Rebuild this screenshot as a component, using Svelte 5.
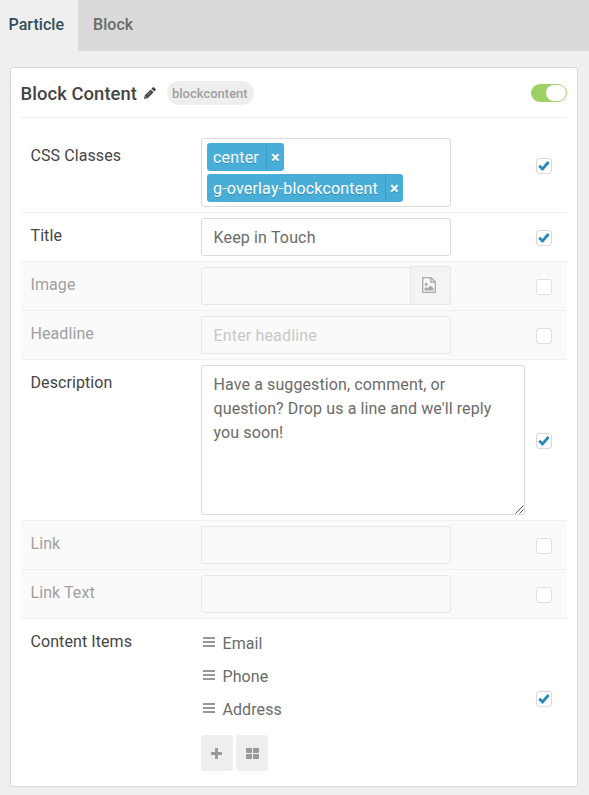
<script>
  const tags = ['center', 'g-overlay-blockcontent'];
  const items = ['Email', 'Phone', 'Address'];
  const rows = [
    { label: 'CSS Classes', kind: 'tags', on: true },
    { label: 'Title', kind: 'text', value: 'Keep in Touch', on: true },
    { label: 'Image', kind: 'image', on: false },
    { label: 'Headline', kind: 'text', placeholder: 'Enter headline', on: false },
    { label: 'Description', kind: 'area', on: true },
    { label: 'Link', kind: 'text', on: false },
    { label: 'Link Text', kind: 'text', on: false },
    { label: 'Content Items', kind: 'items', on: true }
  ];
</script>

<div class="page">
  <nav>
    <span class="tab active">Particle</span>
    <span class="tab">Block</span>
  </nav>
  <section class="card">
    <header>
      <h4>Block Content</h4>
      <svg class="pencil" width="12" height="12" viewBox="0 0 12 12"><path fill="#444" d="M0 12 .8 8.300 6.700 2.400 9.600 5.300 3.700 11.200zM7.400 1.700 8.700.4Q9.400-.2 10.100.4L11.600 1.900Q12.200 2.600 11.600 3.300L10.300 4.600z"/><path d="M3 8.200 6.800 4.400" stroke="#bbb" stroke-width=".6"/><path d="M1.300 9.600 2.400 10.700" stroke="#fff" stroke-width=".8"/></svg>
      <span class="badge">blockcontent</span>
      <span class="toggle"><i></i></span>
    </header>
    {#each rows as row}
      <div class="row {row.kind}" class:off={!row.on}>
        <div class="label">{row.label}</div>
        <div class="field">
          {#if row.kind === 'tags'}
            <div class="selectize">
              {#each tags as tag}
                <div class="tag"><span>{tag}</span><b>×</b></div>
              {/each}
            </div>
          {:else if row.kind === 'text'}
            <div class="input" class:placeholder={!row.value}>{row.value ?? row.placeholder ?? ''}</div>
          {:else if row.kind === 'image'}
            <div class="group">
              <div class="input"></div>
              <div class="pick">
                <svg width="14" height="16" viewBox="0 0 14 16"><path fill="none" stroke="#aaa" stroke-width="1.3" d="M.7.7H9L13.3 5V15.3H.7zM8.8.7V5.2H13.3"/><circle cx="4.2" cy="7.3" r="1.5" fill="#aaa"/><path fill="#aaa" d="M2.5 13.5V11.5L4 10 5.5 11.2 8.5 8.5 11.5 11.3V13.5z"/></svg>
              </div>
            </div>
          {:else if row.kind === 'area'}
            <div class="textarea">
              Have a suggestion, comment, or<br />question? Drop us a line and we'll reply<br />you soon!
              <svg class="grip" width="9" height="9" viewBox="0 0 9 9"><path d="M.5 8.5 8.5.5M4.5 8.5 8.5 4.5" stroke="#555" stroke-width="1"/></svg>
            </div>
          {:else}
            <ul>
              {#each items as item}
                <li>
                  <svg width="12" height="10" viewBox="0 0 12 10"><path fill="#999" d="M0 0h12v2H0zM0 4h12v2H0zM0 8h12v2H0z"/></svg>
                  {item}
                </li>
              {/each}
            </ul>
            <div class="buttons">
              <span class="btn"><svg width="11" height="11" viewBox="0 0 11 11"><path fill="#999" d="M4.7 0h1.6q.7 0 .7.7V4h3.3q.7 0 .7.7v1.6q0 .7-.7.7H7v3.3q0 .7-.7.7H4.7q-.7 0-.7-.7V7H.7Q0 7 0 6.300V4.700Q0 4 .7 4H4V.7Q4 0 4.700 0z"/></svg></span>
              <span class="btn"><svg width="13" height="11" viewBox="0 0 13 11"><g fill="#999"><rect width="6" height="5" rx=".8"/><rect x="7" width="6" height="5" rx=".8"/><rect y="6" width="6" height="5" rx=".8"/><rect x="7" y="6" width="6" height="5" rx=".8"/></g></svg></span>
            </div>
          {/if}
        </div>
        <span class="check">
          {#if row.on}
            <svg width="12" height="10" viewBox="0 0 12 10"><path fill="none" stroke="#2388bd" stroke-width="2.700" d="M1.200 4.700 4.500 8 10.600 1"/></svg>
          {/if}
        </span>
      </div>
    {/each}
  </section>
</div>

<style>
  :global(body) { background: #efefef; }
  .page, .page * { box-sizing: border-box; }
  .page {
    height: 795px;
    overflow: hidden;
    background: #efefef;
    color: #444;
    font: 16px/24px Roboto, "Liberation Sans", sans-serif;
    letter-spacing: 0.08px;
  }
  nav { display: flex; height: 51px; background: #dadada; letter-spacing: 0.04px; }
  .tab { padding: 13px 15px 0; font-weight: 500; color: #6b6b6b; }
  .active { width: 78px; padding: 13px 0 0 8.5px; background: #efefef; color: #314d59; }
  .card {
    width: 568px;
    height: 720px;
    margin: 16px 0 0 10px;
    padding: 0 10px;
    border: 1px solid #d9d9d9;
    border-radius: 3px;
    background: #fff;
  }
  header { display: flex; align-items: center; height: 50px; border-bottom: 1px solid #eee; }
  h4 { width: 116px; margin: 2px 0 0 -0.5px; font-size: 18.4px; font-weight: 500; line-height: 28px; white-space: nowrap; }
  .pencil { margin: 1px 0 0 7px; overflow: visible; }
  .badge {
    width: 87px;
    height: 24px;
    margin: 0 0 0 11.5px;
    padding: 1px 0 0 5px;
    border-radius: 12px;
    background: #eee;
    color: #a0a0a0;
    font-size: 13px;
    font-weight: 500;
    letter-spacing: 0;
  }
  .toggle { display: flex; justify-content: flex-end; width: 36px; height: 18px; margin-left: auto; padding: 1px; border-radius: 9px; background: #9dd065; }
  .toggle i { width: 20px; height: 16px; border-radius: 8px; background: #fff; }
  .row { display: flex; height: 49px; padding: 5px 15px 5px 9.5px; border-bottom: 1px solid #f0f0f0; }
  .row.tags { height: 95px; padding-top: 20px; }
  .row.area { height: 161px; }
  .row.items { height: 158px; border: 0; }
  .off { background: #fafafa; }
  .off .label { color: #a0a0a0; }
  .label { width: 170.5px; padding-top: 6px; }
  .field { flex: 1; color: #6b6b6b; }
  .check {
    display: flex;
    align-items: center;
    justify-content: center;
    align-self: center;
    width: 16px;
    height: 16px;
    margin-top: 1px;
    border: 1px solid #d9d9d9;
    border-radius: 3px;
    background: #fff;
  }
  .tags .check { margin-top: -14px; }
  .off .check { border-color: #e0e0e0; }
  .selectize {
    width: 250px;
    height: 69px;
    padding: 4px 5px;
    border: 1px solid #d9d9d9;
    border-radius: 3px;
  }
  .tag {
    display: flex;
    width: fit-content;
    height: 28px;
    margin-bottom: 3px;
    border-radius: 3px;
    background: #48aed7;
    color: #fff;
    line-height: 29px;
    letter-spacing: 0.18px;
    text-shadow: 0 1px 0 rgba(0, 51, 83, 0.3);
  }
  .tag span { padding: 0 7px 0 6px; }
  .tag b { width: 18px; border-left: 1px solid #3a9bc5; text-align: center; font-size: 16px; }
  .input {
    width: 250px;
    height: 38px;
    padding: 7px 11.5px 0;
    border: 1px solid #d9d9d9;
    border-radius: 3px;
    letter-spacing: 0.16px;
  }
  .placeholder { color: #c8c8c8; }
  .off .input { border-color: #e7e7e7; }
  .group { display: flex; }
  .group .input { width: 209px; border-right: 0; border-radius: 3px 0 0 3px; }
  .pick {
    display: flex;
    align-items: center;
    justify-content: center;
    width: 41px;
    height: 39px;
    margin-top: -1px;
    padding: 0 3px 1px 0;
    border: 1px solid #e5e5e5;
    border-radius: 0 3px 3px 0;
    background: #f4f4f4;
  }
  .textarea {
    position: relative;
    width: 324px;
    height: 150px;
    padding: 7px 11.5px 0;
    border: 1px solid #d9d9d9;
    border-radius: 3px;
    letter-spacing: 0.11px;
  }
  .grip { position: absolute; right: 0; bottom: 0; }
  ul { margin: 3px 0 0; padding: 0; list-style: none; }
  li { display: flex; align-items: center; gap: 8px; height: 33px; padding: 0 0 0 1.5px; }
  li svg { margin-top: -3px; }
  .buttons { display: flex; gap: 3px; margin-top: 9px; }
  .btn { display: flex; align-items: center; justify-content: center; width: 32px; height: 36px; padding: 1px 1px 0 0; border-radius: 3px; background: #eee; }
  .btn + .btn { padding-right: 0; }
</style>
